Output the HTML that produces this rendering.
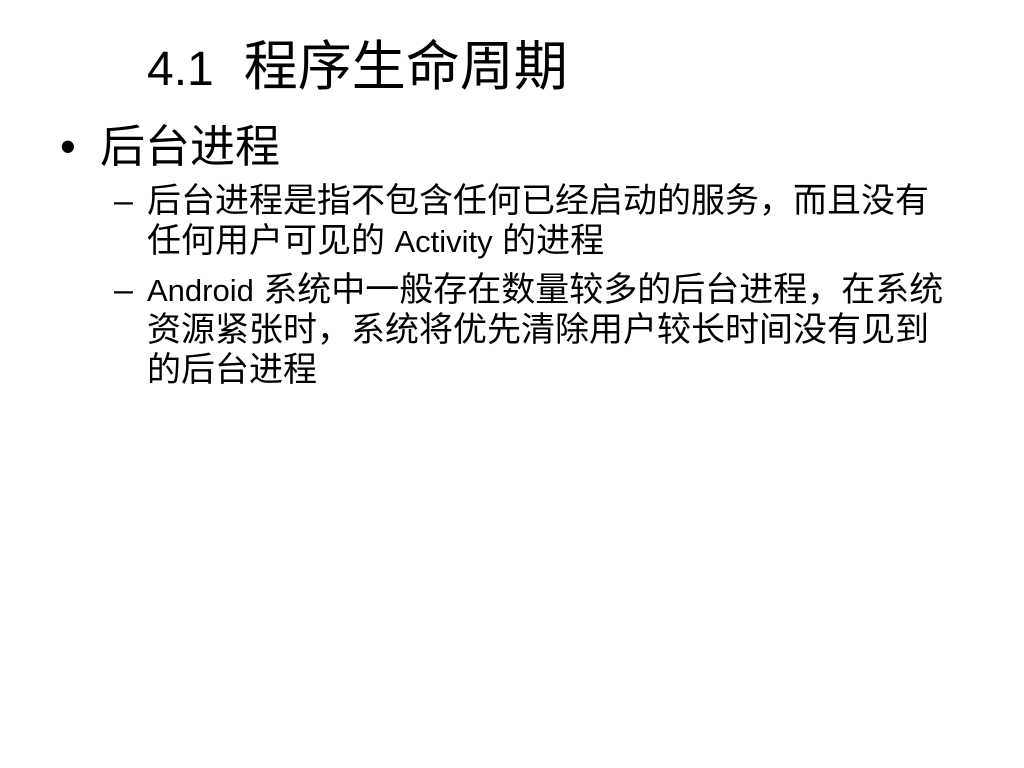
<!DOCTYPE html>
<html><head><meta charset="utf-8"><style>
html,body{margin:0;padding:0;background:#fff;}
body{width:1024px;height:768px;position:relative;overflow:hidden;font-family:"Liberation Sans","Noto Sans CJK SC",sans-serif;color:#000;}
.t{position:absolute;white-space:nowrap;}
.l{font-size:31px;}
</style></head><body>
<div class="t" style="left:147px;top:40px;font-size:54px;line-height:54px;"><span style="font-size:48px">4.1</span>&nbsp; 程序生命周期</div>
<div class="t" style="left:60px;top:124px;font-size:45px;line-height:45px;">•</div>
<div class="t" style="left:100px;top:124px;font-size:45px;line-height:45px;">后台进程</div>
<div class="t" style="left:114px;top:184px;font-size:34px;line-height:34px;">–</div>
<div class="t" style="left:147px;top:184px;font-size:34px;line-height:34px;">后台进程是指不包含任何已经启动的服务，而且没有</div>
<div class="t" style="left:147px;top:224px;font-size:34px;line-height:34px;">任何用户可见的 <span class="l">Activity</span> 的进程</div>
<div class="t" style="left:114px;top:273px;font-size:34px;line-height:34px;">–</div>
<div class="t" style="left:147px;top:273px;font-size:34px;line-height:34px;"><span class="l">Android</span> 系统中一般存在数量较多的后台进程，在系统</div>
<div class="t" style="left:147px;top:313px;font-size:34px;line-height:34px;">资源紧张时，系统将优先清除用户较长时间没有见到</div>
<div class="t" style="left:147px;top:353px;font-size:34px;line-height:34px;">的后台进程</div>
</body></html>
